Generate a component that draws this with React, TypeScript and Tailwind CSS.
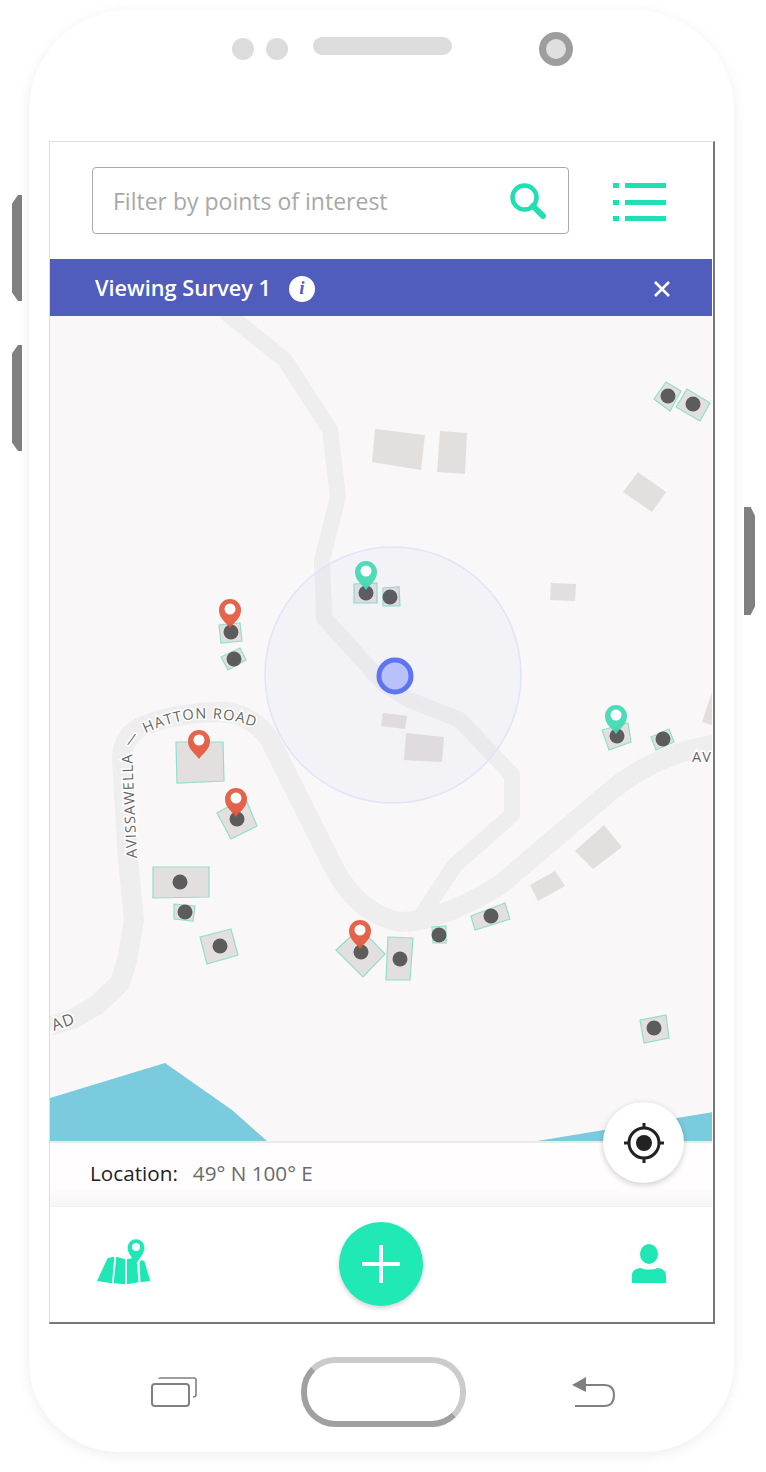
const buildings = [
  '375,429 425,435 421,470 372,462',
  '440,431 467,433 465,474 437,472',
  '623,492 638,472 666,492 652,512',
  '551,583 576,584 575,601 550,600',
  '383,713 407,716 405,729 381,726',
  '406,733 444,737 442,762 404,760',
  '530,885 555,871 565,886 538,901',
  '575,851 604,825 622,847 593,869',
  '712,692 702,722 712,725',
];

const surveyed = [
  '153,867 209,867 209,897 153,898',
  '174,904 195,906 193,921 174,919',
  '200,937 231,929 238,955 207,964',
  '336,950 360,928 385,954 363,977',
  '388,937 413,938 410,980 386,980',
  '432,927 446,926 446,943 433,943',
  '471,916 505,903 510,919 475,930',
  '219,625 240,623 242,641 221,643',
  '221,657 240,648 246,660 228,670',
  '176,742 223,742 224,781 177,783',
  '217,813 245,797 257,826 231,839',
  '354,584 377,583 377,603 354,603',
  '383,588 399,587 400,606 383,606',
  '654,399 666,382 681,391 670,411',
  '676,407 687,389 710,403 700,421',
  '602,730 628,723 631,742 609,750',
  '651,737 669,729 674,742 656,750',
  '640,1020 666,1015 669,1038 644,1043',
];

const dots = [
  [231, 632], [234, 659], [366, 593], [390, 597], [237, 819], [180, 882],
  [185, 912], [220, 946], [361, 952], [400, 959], [439, 935], [491, 916],
  [654, 1028], [617, 736], [663, 739], [668, 396], [693, 404],
];

const pins = [
  { x: 230, y: 599, color: '#e4593f' },
  { x: 199, y: 730, color: '#e4593f' },
  { x: 236, y: 788, color: '#e4593f' },
  { x: 360, y: 920, color: '#e4593f' },
  { x: 366, y: 561, color: '#44d9b4' },
  { x: 616, y: 705, color: '#44d9b4' },
];

function MapCanvas() {
  return (
    <svg viewBox="50 316 662 825" className="block h-[825px] w-[662px]">
      <rect x="50" y="316" width="662" height="825" fill="#f9f7f7" />
      <polygon points="50,1098 165,1063 232,1110 267,1141 50,1141" fill="#7bcbdf" />
      <polygon points="537,1141 713,1112 713,1141" fill="#7bcbdf" />
      <g fill="none" stroke="#efeeee" strokeLinejoin="round">
        <path strokeWidth="16" d="M225 312 L285 360 L330 430 L338 497 L322 560 L324 618 L385 685 L410 700 L460 720 L512 775 L512 815 L455 865 L420 918" />
        <path strokeWidth="20" d="M50 1026 L73 1019 L97 1005 L120 983 L127 960 L134 920 L128 860 L122 760 Q122 735 145 725 Q180 712 225 712 Q255 716 270 740 L295 790 L335 870 Q360 915 400 922 Q440 922 500 885 L600 800 Q650 755 713 745" />
      </g>
      {buildings.map((points) => (
        <polygon key={points} points={points} fill="#e4dfdf" />
      ))}
      {surveyed.map((points) => (
        <polygon key={points} points={points} fill="#e4dfdf" stroke="#8fe0cb" strokeWidth="1.2" />
      ))}
      {dots.map(([cx, cy]) => (
        <circle key={`${cx}-${cy}`} cx={cx} cy={cy} r="7.5" fill="#5c5c5c" />
      ))}
      <path id="hatton" d="M137 858 L132 753 Q131 740 146 733 Q170 722 193 719 Q225 716 258 728" fill="none" />
      <g fill="#666666" stroke="#ffffff" strokeWidth="3" fontFamily="'Open Sans', sans-serif" fontSize="14.5" letterSpacing="1.1" style={{ paintOrder: 'stroke' }}>
        <text>
          <textPath href="#hatton">AVISSAWELLA — HATTON ROAD</textPath>
        </text>
        <text x="692" y="762">AV</text>
        <text x="54" y="1031" fontSize="16" transform="rotate(-20 54 1031)">AD</text>
      </g>
      <circle cx="393" cy="675" r="128" fill="#5f78ff" fillOpacity="0.04" stroke="#e1e4fa" strokeWidth="1.5" />
      <circle cx="395" cy="676" r="16" fill="#b9c1fb" stroke="#5f74f2" strokeWidth="5" />
      {pins.map((pin) => (
        <g key={`${pin.x}-${pin.y}`} opacity="0.93">
          <path
            d={`M${pin.x} ${pin.y + 29} C${pin.x - 3} ${pin.y + 24} ${pin.x - 11} ${pin.y + 20} ${pin.x - 11} ${pin.y + 11} A11 11 0 1 1 ${pin.x + 11} ${pin.y + 11} C${pin.x + 11} ${pin.y + 20} ${pin.x + 3} ${pin.y + 24} ${pin.x} ${pin.y + 29} Z`}
            fill={pin.color}
          />
          <circle cx={pin.x} cy={pin.y + 10} r="5.5" fill="#ffffff" />
        </g>
      ))}
    </svg>
  );
}

export default function App() {
  return (
    <div className="relative h-[1472px] w-[766px] overflow-hidden bg-white font-['Open_Sans',sans-serif]">
      {/* side buttons */}
      <div className="absolute left-[12px] top-[195px] h-[106px] w-[10px] bg-[#808080] [clip-path:polygon(100%_0,100%_100%,60%_100%,0_92%,0_8%,60%_0)]" />
      <div className="absolute left-[12px] top-[345px] h-[106px] w-[10px] bg-[#808080] [clip-path:polygon(100%_0,100%_100%,60%_100%,0_92%,0_8%,60%_0)]" />
      <div className="absolute left-[744px] top-[507px] h-[108px] w-[11px] bg-[#808080] [clip-path:polygon(0_0,60%_0,100%_8%,100%_92%,60%_100%,0_100%)]" />

      <div className="absolute left-[29px] top-[10px] h-[1442px] w-[705px] rounded-t-[100px] rounded-b-[90px] bg-white shadow-[0_3px_14px_rgba(0,0,0,0.07)]">
        {/* sensors */}
        <div className="mt-[22px] flex h-[34px] items-center pl-[203px] pt-0">
          <div className="h-[22px] w-[22px] rounded-full bg-[#dcdcdc]" />
          <div className="ml-[12px] h-[22px] w-[22px] rounded-full bg-[#dcdcdc]" />
          <div className="ml-[25px] -mt-[6px] h-[18px] w-[139px] rounded-[9px] bg-[#dcdcdc]" />
          <div className="ml-[87px] h-[34px] w-[34px] rounded-full border-[7px] border-[#9d9d9d] bg-[#dfdfdf]" />
        </div>

        {/* screen */}
        <div className="relative ml-[20px] mt-[75px] w-[666px] border-t border-l border-t-[#dddddd] border-l-[#dddddd] border-r-2 border-b-2 border-r-[#777777] border-b-[#777777] bg-white">
          <div className="flex h-[117px] items-center pl-[42px]">
            <div className="flex h-[67px] w-[477px] items-center justify-between rounded-[4px] border border-[#a9a9a9] pl-[20px] pr-[22px]">
              <span className="mt-[2px] text-[23px] text-[#a8a8a8]">Filter by points of interest</span>
              <svg viewBox="0 0 36 36" className="h-[36px] w-[36px]" fill="none" stroke="#1fe0b0">
                <circle cx="14.5" cy="14.5" r="12" strokeWidth="4.5" />
                <path d="M23 23 L33 33" strokeWidth="6" strokeLinecap="round" />
              </svg>
            </div>
            <svg viewBox="0 0 54 38" className="ml-[44px] mt-[2px] h-[38px] w-[54px]" fill="#1fe0b0">
              <rect x="0" y="0" width="6" height="5" />
              <rect x="12" y="0" width="41" height="5" />
              <rect x="0" y="17" width="6" height="5" />
              <rect x="12" y="17" width="41" height="5" />
              <rect x="0" y="33" width="6" height="5" />
              <rect x="12" y="33" width="41" height="5" />
            </svg>
          </div>

          <div className="flex h-[57px] w-[662px] items-center bg-[#505dbc] pl-[45px] pr-[41px] pt-[2px] text-white">
            <span className="text-[21.7px] font-semibold">Viewing Survey 1</span>
            <span className="ml-[18px] flex h-[26px] w-[26px] items-center justify-center rounded-full bg-white font-['Liberation_Serif',serif] text-[19px] font-bold italic text-[#505dbc]">i</span>
            <svg viewBox="0 0 18 18" className="ml-auto h-[18px] w-[18px]" fill="none" stroke="#ffffff" strokeWidth="2.6">
              <path d="M2 2 L16 16 M16 2 L2 16" />
            </svg>
          </div>

          <MapCanvas />

          <div className="relative flex h-[65px] w-[662px] items-center border-t-2 border-[#ebebeb] bg-gradient-to-b from-[#fffdfd] from-70% to-[#f7f5f5] pb-[2px] pl-[40px] text-[20.7px]">
            <span className="text-[#222222]">Location:</span>
            <span className="ml-[15px] text-[#6b6b6b]">49° N 100° E</span>
            <div className="absolute -top-[41px] left-[553px] flex h-[81px] w-[81px] items-center justify-center rounded-full bg-white shadow-[0_2px_6px_rgba(0,0,0,0.2)]">
              <svg viewBox="0 0 40 40" className="h-[40px] w-[40px]" fill="none" stroke="#222222">
                <circle cx="20" cy="20" r="15" strokeWidth="3" />
                <circle cx="20" cy="20" r="8" fill="#222222" stroke="none" />
                <path d="M20 0 V6 M20 34 V40 M0 20 H6 M34 20 H40" strokeWidth="3" />
              </svg>
            </div>
          </div>

          <div className="grid h-[116px] w-[662px] grid-cols-[1fr_auto_1fr] items-center border-t border-[#f1f1f1]">
            <svg viewBox="93 1236 58 50" className="mb-[8px] ml-[45px] h-[50px] w-[58px]" fill="#1fe6b5">
              <polygon points="105.7,1258 112.3,1256.7 110,1283.3 95,1281" />
              <polygon points="114.3,1256.7 123.3,1259.3 123.3,1284.3 111.7,1283.3" />
              <polygon points="125,1259.3 131,1258 135,1264 136.5,1282.3 125,1284.3" />
              <polygon points="137.5,1263 139,1260 142.3,1261 148.3,1281 138.5,1282.3" />
              <path
                fillRule="evenodd"
                d="M134 1264 C131 1259 125.5 1253 125.5 1247.7 A8.5 8.5 0 1 1 142.5 1247.7 C142.5 1253 137 1259 134 1264 Z M134 1243 A4 4 0 0 0 134 1251 A4 4 0 0 0 134 1243 Z"
              />
            </svg>
            <button className="mb-[2px] flex h-[84px] w-[84px] items-center justify-center rounded-full bg-[#20e9b6] shadow-[0_2px_5px_rgba(0,0,0,0.2)]">
              <svg viewBox="0 0 38 38" className="h-[38px] w-[38px]" stroke="#ffffff" strokeWidth="4">
                <path d="M19 0 V38 M0 19 H38" />
              </svg>
            </button>
            <svg viewBox="0 0 34 39" className="mb-[2px] mr-[46px] h-[39px] w-[34px] justify-self-end" fill="#1fe6b5">
              <ellipse cx="17" cy="10" rx="9" ry="10" />
              <path d="M0 39 V31 C0 26 5 24 9 24 C12 26 22 26 25 24 C29 24 34 26 34 31 V39 Z" />
            </svg>
          </div>
        </div>

        {/* hardware buttons */}
        <div className="mt-[33px] flex items-center pl-[122px]">
          <svg viewBox="0 0 46 30" className="h-[30px] w-[46px]" fill="none" stroke="#808080" strokeWidth="1.6">
            <rect x="1" y="7" width="37" height="22" rx="3" strokeWidth="2" />
            <path d="M8 2 Q8 1 10 1 H43 Q45 1 45 3 V18 Q45 20 42 20" />
          </svg>
          <div className="ml-[104px] h-[70px] w-[165px] rounded-[34px] border-[6px] border-t-[#cbcbcb] border-r-[#cbcbcb] border-b-[#a0a0a0] border-l-[#a0a0a0] bg-white" />
          <svg viewBox="0 0 44 30" className="ml-[106px] h-[30px] w-[44px]" fill="none" stroke="#808080" strokeWidth="2">
            <path d="M0 8 L14 0 V15 Z" fill="#808080" stroke="none" />
            <path d="M12 8 H32 Q42 8 42 18 Q42 29 32 29 H3" />
          </svg>
        </div>
      </div>
    </div>
  );
}
